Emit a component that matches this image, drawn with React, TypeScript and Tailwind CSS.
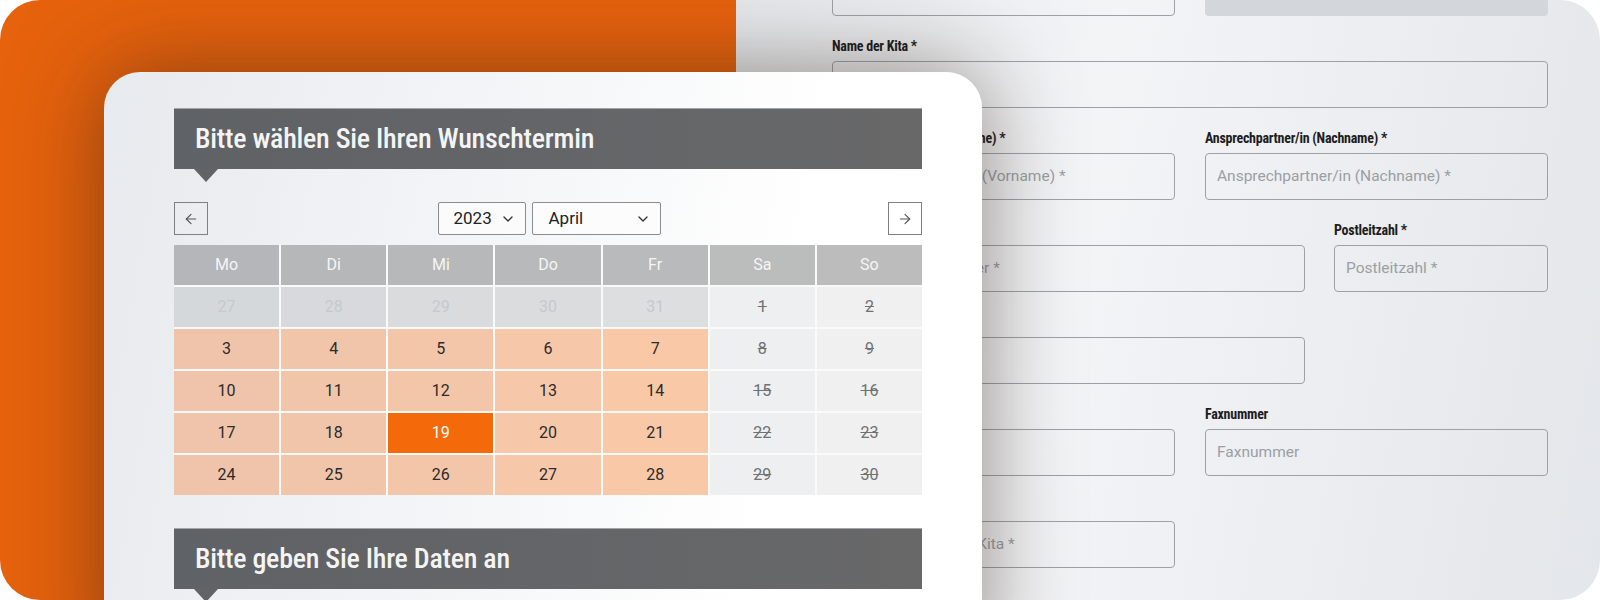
import { ArrowLeft, ArrowRight, ChevronDown } from "lucide-react";

const cond =
  "font-['Roboto_Condensed','DejaVu_Sans_Condensed','Liberation_Sans_Narrow','Noto_Sans',sans-serif] font-stretch-condensed";
const sans = "font-['Roboto','Liberation_Sans',sans-serif]";

const dayNames = ["Mo", "Di", "Mi", "Do", "Fr", "Sa", "So"];
const headBg = ["bg-[#b4b6b9]", "bg-[#b5b7b9]", "bg-[#b6b8ba]", "bg-[#b8b9bb]", "bg-[#b9babb]", "bg-[#bbbcbc]", "bg-[#bcbcbd]"];
const peachBg = ["bg-[#efc4aa]", "bg-[#f1c5a9]", "bg-[#f3c6a9]", "bg-[#f6c7a8]", "bg-[#f8c8a7]"];
const mutedBg = ["bg-[#d5d8db]", "bg-[#d7d9dc]", "bg-[#d9dbdd]", "bg-[#dbdcde]", "bg-[#dddedf]"];
const weeks = [
  [27, 28, 29, 30, 31, 1, 2],
  [3, 4, 5, 6, 7, 8, 9],
  [10, 11, 12, 13, 14, 15, 16],
  [17, 18, 19, 20, 21, 22, 23],
  [24, 25, 26, 27, 28, 29, 30],
];

function SectionHeading({ title }: { title: string }) {
  return (
    <div className="relative">
      <div className="h-[61px] flex items-center pl-[21px] bg-[linear-gradient(90deg,#5f6266,#686869)] border-t border-[#a2a4a6]">
        <span className={`${cond} text-[28px] font-medium leading-none tracking-[-0.25px] text-[#f4f4f4]`}>{title}</span>
      </div>
      <div className="absolute left-[20px] top-full w-0 h-0 border-l-[12px] border-r-[12px] border-t-[13px] border-l-transparent border-r-transparent border-t-[#616366]" />
    </div>
  );
}

function DayCell({ n, row, col }: { n: number; row: number; col: number }) {
  const muted = row === 0 && col < 5;
  const weekend = col >= 5;
  const selected = n === 19 && row === 3;

  let cls = `${peachBg[col]} text-[#2b2b2b]`;
  if (muted) cls = `${mutedBg[col]} text-[#c6c9cd]`;
  else if (weekend) cls = `${col === 5 ? "bg-[#eeeff0]" : "bg-[#f0f0f1]"} text-[#6f7173] line-through`;
  else if (selected) cls = "bg-[#f46a0b] text-white";

  return (
    <div className={`h-[40px] flex items-center justify-center ${sans} text-[16px] ${cls}`}>{n}</div>
  );
}

function Calendar() {
  return (
    <>
      <div className="mt-[33px] h-[33px] flex items-center justify-between">
        <button className="w-[34px] h-[33px] border border-[#7d7f82] flex items-center justify-center text-[#55575a]">
          <ArrowLeft className="w-[16px] h-[16px]" strokeWidth={1.75} />
        </button>
        <div className="flex gap-[6px] ml-[2px]">
          <div className={`w-[88px] h-[33px] border border-[#8a8c8e] rounded-[2px] bg-[#fbfbfc] flex items-center justify-between pl-[15px] pr-[9px] ${sans} text-[17px] text-[#222]`}>
            2023
            <ChevronDown className="w-[16px] h-[16px] text-[#333]" strokeWidth={2} />
          </div>
          <div className={`w-[129px] h-[33px] border border-[#8a8c8e] rounded-[2px] bg-[#fcfcfd] flex items-center justify-between pl-[16px] pr-[9px] ${sans} text-[17px] text-[#222]`}>
            April
            <ChevronDown className="w-[16px] h-[16px] text-[#333]" strokeWidth={2} />
          </div>
        </div>
        <button className="w-[34px] h-[33px] border border-[#7d7f82] flex items-center justify-center text-[#55575a]">
          <ArrowRight className="w-[16px] h-[16px]" strokeWidth={1.75} />
        </button>
      </div>

      <div className="mt-[10px] grid grid-cols-7 gap-[2px] bg-[#fafafa]">
        {dayNames.map((d, i) => (
          <div key={d} className={`h-[40px] flex items-center justify-center ${headBg[i]} ${sans} text-[16px] text-[#f5f5f5]`}>
            {d}
          </div>
        ))}
        {weeks.map((w, r) => w.map((n, c) => <DayCell key={`${r}-${c}`} n={n} row={r} col={c} />))}
      </div>
    </>
  );
}

function Field({
  label,
  placeholder,
  width,
  filled,
}: {
  label?: string;
  placeholder?: string;
  width: string;
  filled?: boolean;
}) {
  return (
    <div className={width}>
      <div className={`${cond} h-[22px] mb-[4px] text-[14px] font-bold leading-[22px] tracking-[-0.25px] text-[#1d1d1d]`}>{label}</div>
      <div
        className={`h-[47px] rounded-[4px] flex items-center pl-[11px] ${sans} text-[15.5px] text-[#9b9fa4] ${
          filled ? "bg-[#d3d6da]" : "border-[1.5px] border-[#9da1a6]"
        }`}
      >
        {placeholder}
      </div>
    </div>
  );
}

function Form() {
  return (
    <div className="-mt-[57px] pl-[96px] pr-[52px] flex flex-col gap-[19px]">
      <div className="flex gap-[30px]">
        <Field width="w-[343px]" />
        <Field width="w-[343px]" filled />
      </div>
      <Field label="Name der Kita *" placeholder="Name der Kita *" width="w-[716px]" />
      <div className="flex gap-[30px]">
        <Field label="Ansprechpartner/in (Vorname) *" placeholder="Ansprechpartner/in (Vorname) *" width="w-[343px]" />
        <Field label="Ansprechpartner/in (Nachname) *" placeholder="Ansprechpartner/in (Nachname) *" width="w-[343px]" />
      </div>
      <div className="flex gap-[29px]">
        <Field label="Straße/Hausnummer *" placeholder="Straße/Hausnummer *" width="w-[473px]" />
        <Field label="Postleitzahl *" placeholder="Postleitzahl *" width="w-[214px]" />
      </div>
      <Field label="Ort *" placeholder="Ort *" width="w-[473px]" />
      <div className="flex gap-[30px]">
        <Field label="Telefonnummer *" placeholder="Telefonnummer *" width="w-[343px]" />
        <Field label="Faxnummer" placeholder="Faxnummer" width="w-[343px]" />
      </div>
      <Field label="E-Mail-Adresse der Kita *" placeholder="E-Mail-Adresse der Kita *" width="w-[343px]" />
    </div>
  );
}

export default function App() {
  return (
    <div className="relative w-[1600px] h-[600px] overflow-hidden bg-white">
      <div className="flex h-full rounded-[40px] overflow-hidden">
        <div className="w-[736px] bg-[#e6620d]" />
        <div className="flex-1 overflow-hidden bg-[linear-gradient(100deg,#e6e9ec_0%,#f3f4f6_40%,#e3e6ea_100%)]">
          <Form />
        </div>
      </div>

      <div className="absolute left-[104px] top-[72px] w-[878px] h-[600px] rounded-t-[36px] pt-[36px] pl-[70px] bg-[linear-gradient(100deg,#e7eaee_0%,#f5f6f8_45%,#ffffff_75%)] shadow-[0_0_90px_rgba(45,30,20,0.5)]">
        <div className="w-[748px]">
          <SectionHeading title="Bitte wählen Sie Ihren Wunschtermin" />
          <Calendar />
          <div className="mt-[33px]">
            <SectionHeading title="Bitte geben Sie Ihre Daten an" />
          </div>
        </div>
      </div>
    </div>
  );
}
